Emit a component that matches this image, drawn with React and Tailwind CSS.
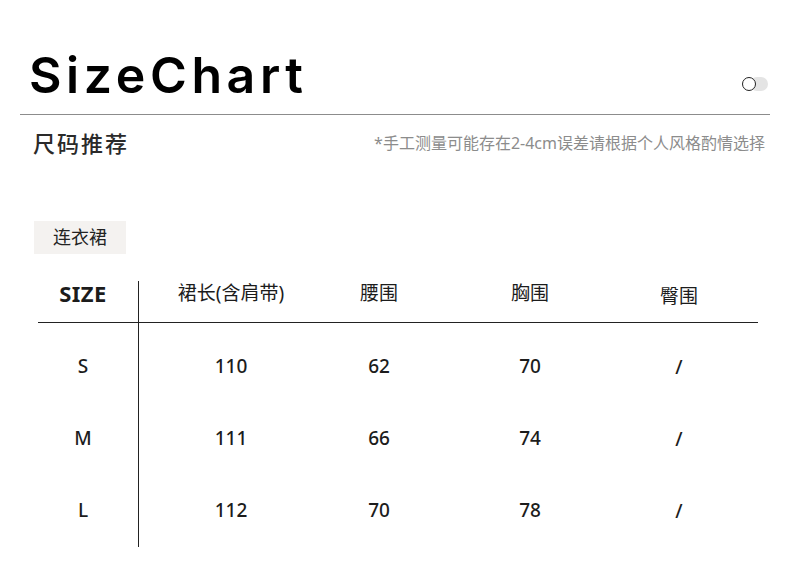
import React from 'react'

const rows = [
  { size: 'S', len: '110', waist: '62', bust: '70', hip: '/' },
  { size: 'M', len: '111', waist: '66', bust: '74', hip: '/' },
  { size: 'L', len: '112', waist: '70', bust: '78', hip: '/' },
]

const cjk = { fontFamily: '"Noto Sans", "Noto Sans CJK SC", sans-serif' }

const Cell = ({ children, className = '' }) => (
  <div className={`flex items-center justify-center ${className}`}>{children}</div>
)

const App = () => {
  return (
    <div className="w-[790px] h-[571px] bg-white overflow-hidden text-[#1c1c1c]" style={cjk}>
      {/* Title */}
      <div className="flex items-center justify-between pt-[50px] pl-[29px] pr-[22px]">
        <h1
          className="text-[50px] leading-none font-semibold tracking-[4.6px] text-black"
          style={{ fontFamily: 'Inter, "Liberation Sans", sans-serif' }}
        >
          SizeChart
        </h1>
        <div className="relative w-[26px] h-[14px] mt-[18px]">
          <div className="absolute right-0 top-0 w-[18px] h-[14px] rounded-full bg-[#e4e4e4]" />
          <div className="absolute left-0 top-0 w-[14px] h-[14px] rounded-full border-[1.5px] border-[#222] bg-white" />
        </div>
      </div>
      <div className="mx-[20px] mt-[14px] border-t border-[#8c8c8c]" />

      {/* Subtitle */}
      <div className="flex items-center justify-between pl-[33px] pr-[25px] mt-[13px]">
        <span className="text-[22px] leading-[30px] font-medium text-[#2a2a2a] tracking-[2px]">尺码推荐</span>
        <span className="text-[16px] leading-[30px] text-[#8c8c8c]">*手工测量可能存在2-4cm误差请根据个人风格酌情选择</span>
      </div>

      {/* Tag */}
      <div className="ml-[34px] mt-[63px] w-[92px] h-[33px] bg-[#f4f2f0] flex items-center justify-center text-[18px] text-[#222]">
        连衣裙
      </div>

      {/* Table */}
      <div className="mt-[27px] ml-[38px] w-[720px] relative">
        <div className="absolute left-[100px] top-0 h-[266px] border-l border-[#222]" />
        <div className="grid grid-cols-[101px_184px_112px_190px_108px] h-[42px] border-b border-[#222] text-[19px] leading-[24px] items-start">
          <div className="flex justify-center pr-[11px] font-bold text-[22px] tracking-[0.5px]">SIZE</div>
          <div className="flex justify-center">裙长(含肩带)</div>
          <div className="flex justify-center">腰围</div>
          <div className="flex justify-center">胸围</div>
          <div className="flex justify-center pt-[3px]">臀围</div>
        </div>
        <div className="pt-[7px]">
          {rows.map((r) => (
            <div key={r.size} className="grid grid-cols-[101px_184px_112px_190px_108px] h-[72px] text-[19px] font-medium">
              <Cell className="pr-[11px]">{r.size}</Cell>
              <Cell>{r.len}</Cell>
              <Cell>{r.waist}</Cell>
              <Cell>{r.bust}</Cell>
              <Cell className="pt-[3px]">{r.hip}</Cell>
            </div>
          ))}
        </div>
      </div>
    </div>
  )
}

export default App
